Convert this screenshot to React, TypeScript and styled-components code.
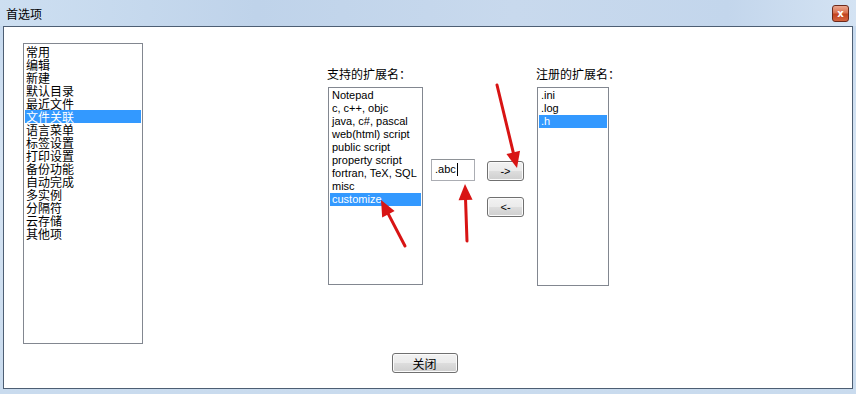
import React from "react";
import styled, {createGlobalStyle} from "styled-components";

const GlobalStyle = createGlobalStyle`
  html, body {
    margin: 0;
    padding: 0;
    width: 856px;
    height: 394px;
    overflow: hidden;
    font-family: "Liberation Sans", "Noto Sans CJK SC", sans-serif;
  }
`

const Window = styled.div`
  position: relative;
  width: 856px;
  height: 394px;
  display: flex;
  flex-direction: column;
  background: linear-gradient(180deg, #c4d8ee 0%, #d6e4f3 40%, #c9dbee 100%);
  box-sizing: border-box;
`

const TitleBar = styled.div`
  height: 26px;
  display: flex;
  align-items: center;
  justify-content: space-between;
  padding: 0 7px 0 6px;
  background: linear-gradient(90deg, #cddff1 0%, #bfd3ea 30%, #c8d9ed 60%, #c3d6ec 85%, #d4e3f3 100%);
`

const Title = styled.span`
  font-size: 12px;
  color: #000;
  font-family: "Noto Sans CJK SC", sans-serif;
`

const CloseBox = styled.div`
  width: 17px;
  height: 17px;
  margin-top: 1px;
  border: 1px solid #6d2a1c;
  border-radius: 3px;
  background: linear-gradient(180deg, #eba78f 0%, #d9714f 45%, #c2431f 55%, #d6653f 100%);
  color: #fff;
  font: bold 10px "DejaVu Sans", sans-serif;
  display: flex;
  align-items: center;
  justify-content: center;
  box-sizing: border-box;
`

const Client = styled.div`
  flex: 1;
  margin: 0 3px 5px 3px;
  background: #fff;
  border: 1px solid #4d5e73;
  display: flex;
  flex-direction: column;
  padding: 16px 0 0 19px;
`

const TopRow = styled.div`
  display: flex;
  align-items: flex-start;
`

const ListBox = styled.div<{ $w: number; $h: number }>`
  width: ${p => p.$w}px;
  height: ${p => p.$h}px;
  border: 1px solid #828790;
  box-sizing: border-box;
  padding: 1px;
  display: flex;
  flex-direction: column;
  font-size: 12px;
`

const Item = styled.div<{ $sel?: boolean; $latin?: boolean }>`
  height: 13px;
  line-height: 13px;
  padding-left: ${p => (p.$latin ? 2 : 1)}px;
  white-space: nowrap;
  font-size: ${p => (p.$latin ? 11 : 12)}px;
  font-family: ${p => (p.$latin ? `"Liberation Sans", sans-serif` : `"Noto Sans CJK SC", sans-serif`)};
  background: ${p => (p.$sel ? "#3399ff" : "transparent")};
  color: ${p => (p.$sel ? "#fff" : "#000")};
`

const Column = styled.div<{ $ml: number; $mt: number }>`
  margin-left: ${p => p.$ml}px;
  margin-top: ${p => p.$mt}px;
  display: flex;
  flex-direction: column;
`

const Label = styled.div`
  font-family: "Noto Sans CJK SC", sans-serif;
  font-size: 12px;
  line-height: 14px;
  height: 14px;
  margin-bottom: 6px;
  margin-left: -1px;
`

const TextBox = styled.div`
  width: 44px;
  height: 22px;
  box-sizing: border-box;
  border: 1px solid #abadb3;
  border-top-color: #8e9297;
  padding: 3px 0 0 3px;
  font-size: 11px;
  display: flex;
  align-items: flex-start;
`

const Caret = styled.span`
  display: inline-block;
  width: 1px;
  height: 13px;
  background: #000;
  margin-left: 1px;
`

const ButtonStack = styled.div`
  display: flex;
  flex-direction: column;
  gap: 16px;
`

const WinButton = styled.div<{ $w: number }>`
  width: ${p => p.$w}px;
  height: 20px;
  box-sizing: border-box;
  border: 1px solid #707070;
  border-radius: 3px;
  background: linear-gradient(180deg, #f2f2f2 0%, #ebebeb 48%, #dddddd 52%, #cfcfcf 100%);
  box-shadow: inset 0 0 0 1px #fbfbfb;
  display: flex;
  align-items: center;
  justify-content: center;
  font-size: 11px;
  color: #000;
`

const BottomRow = styled.div`
  display: flex;
  justify-content: center;
  margin-top: 9px;
  padding-right: 26px;
`

const ButtonText = styled.span`
  font-family: "Noto Sans CJK SC", sans-serif;
  font-size: 12px;
`

const Annotations = styled.svg`
  position: absolute;
  left: 0;
  top: 0;
  pointer-events: none;
`

const categories = ["常用", "编辑", "新建", "默认目录", "最近文件", "文件关联", "语言菜单", "标签设置", "打印设置", "备份功能", "自动完成", "多实例", "分隔符", "云存储", "其他项"];
const supported = ["Notepad", "c, c++, objc", "java, c#, pascal", "web(html) script", "public script", "property script", "fortran, TeX, SQL", "misc", "customize"];
const registered = [".ini", ".log", ".h"];

const Arrow = ({x1, y1, x2, y2}: { x1: number; y1: number; x2: number; y2: number }) => {
  const dx = x2 - x1;
  const dy = y2 - y1;
  const len = Math.sqrt(dx * dx + dy * dy);
  const ux = dx / len;
  const uy = dy / len;
  const hl = 16;
  const hw = 7;
  const bx = x2 - ux * hl;
  const by = y2 - uy * hl;
  return (
    <g>
      <line x1={x1} y1={y1} x2={bx + ux * 2} y2={by + uy * 2} stroke="#d81414" strokeWidth={3} strokeLinecap="round"/>
      <polygon
        points={`${x2},${y2} ${bx - uy * hw},${by + ux * hw} ${bx + uy * hw},${by - ux * hw}`}
        fill="#d81414"
      />
    </g>
  );
}

export default function App() {
  return (
    <>
      <GlobalStyle/>
      <Window>
        <TitleBar>
          <Title>首选项</Title>
          <CloseBox>x</CloseBox>
        </TitleBar>
        <Client>
          <TopRow>
            <ListBox $w={120} $h={301}>
              {categories.map((c, i) => <Item key={c} $sel={i === 5}>{c}</Item>)}
            </ListBox>
            <Column $ml={185} $mt={24}>
              <Label>支持的扩展名：</Label>
              <ListBox $w={95} $h={198}>
                {supported.map((s, i) => <Item key={s} $latin $sel={i === 8}>{s}</Item>)}
              </ListBox>
            </Column>
            <Column $ml={8} $mt={116}>
              <TextBox>.abc<Caret/></TextBox>
            </Column>
            <Column $ml={12} $mt={118}>
              <ButtonStack>
                <WinButton $w={37}>-&gt;</WinButton>
                <WinButton $w={37}>&lt;-</WinButton>
              </ButtonStack>
            </Column>
            <Column $ml={13} $mt={24}>
              <Label>注册的扩展名：</Label>
              <ListBox $w={72} $h={199}>
                {registered.map((s, i) => <Item key={s} $latin $sel={i === 2}>{s}</Item>)}
              </ListBox>
            </Column>
          </TopRow>
          <BottomRow>
            <WinButton $w={66}><ButtonText>关闭</ButtonText></WinButton>
          </BottomRow>
        </Client>
        <Annotations width={856} height={394}>
          <Arrow x1={405} y1={246} x2={381} y2={200}/>
          <Arrow x1={467} y1={241} x2={465} y2={184}/>
          <Arrow x1={497} y1={85} x2={517} y2={168}/>
        </Annotations>
      </Window>
    </>
  );
}
